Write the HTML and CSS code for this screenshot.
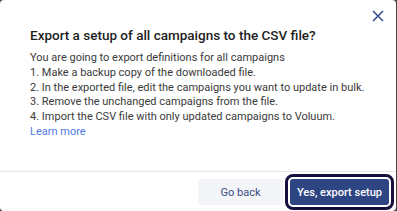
FILE: index.html
```html
<!DOCTYPE html>
<html lang="en">
<head>
    <meta charset="UTF-8">
    <meta name="viewport" content="width=device-width, initial-scale=1.0">
    <title>Export setup</title>
    <link rel="stylesheet" href="styles.css">
</head>
<body>
    <div class="dialog">
        <div class="dialog__top">
            <button class="dialog__close" aria-label="Close">
                <svg width="12" height="12" viewBox="0 0 12 12">
                    <path d="M1 1L11 11M11 1L1 11" stroke="#3b4f8e" stroke-width="1.6" fill="none"/>
                </svg>
            </button>
        </div>
        <h2 class="dialog__title">Export a setup of all campaigns to the CSV file?</h2>
        <div class="dialog__body">
            <p>You are going to export definitions for all campaigns</p>
            <p>1. Make a backup copy of the downloaded file.</p>
            <p>2. In the exported file, edit the campaigns you want to update in bulk.</p>
            <p>3. Remove the unchanged campaigns from the file.</p>
            <p>4. Import the CSV file with only updated campaigns to Voluum.</p>
            <a class="dialog__link" href="#">Learn more</a>
        </div>
        <div class="dialog__footer">
            <button class="dialog__button dialog__button--secondary">Go back</button>
            <button class="dialog__button dialog__button--primary">Yes, export setup</button>
        </div>
    </div>
</body>
</html>
```

FILE: styles.css
```css
:root {
    --navy: #2e4584;
    --focus: #15103f;
    --text: #3a3a3a;
    --link: #4f7ae6;
}

* {
    margin: 0;
    padding: 0;
    box-sizing: border-box;
}

body {
    background: #454545;
    font-family: Roboto, "Liberation Sans", sans-serif;
}

.dialog {
    display: flex;
    flex-direction: column;
    width: 396px;
    height: 211px;
    border-radius: 4px;
    background: #fff;
}

.dialog__top {
    display: flex;
    justify-content: flex-end;
    height: 26px;
    padding: 10px 12px 0 0;
}

.dialog__close {
    display: flex;
    width: 12px;
    height: 12px;
    border: 0;
    background: none;
}

.dialog__title {
    margin: 0 0 7px 30px;
    font-size: 13.5px;
    line-height: 18px;
    font-weight: 500;
    color: #1e1e1e;
}

.dialog__body {
    padding-left: 30px;
    font-size: 11px;
    line-height: 14.8px;
    color: var(--text);
}

.dialog__link {
    color: var(--link);
    text-decoration: none;
}

.dialog__footer {
    display: flex;
    justify-content: flex-end;
    gap: 7px;
    margin-top: auto;
    height: 40px;
    padding: 7px 7px 0 0;
    border-top: 1px solid #e3e6ec;
}

.dialog__button {
    height: 26px;
    border: 0;
    border-radius: 3px;
    font-family: inherit;
    font-size: 11px;
}

.dialog__button--secondary {
    width: 85px;
    background: #f3f5f8;
    color: #3b4a7e;
}

.dialog__button--primary {
    width: 99px;
    background: var(--navy);
    color: #fff;
    font-weight: 500;
    outline: 3px solid var(--focus);
    outline-offset: 2px;
}
```
